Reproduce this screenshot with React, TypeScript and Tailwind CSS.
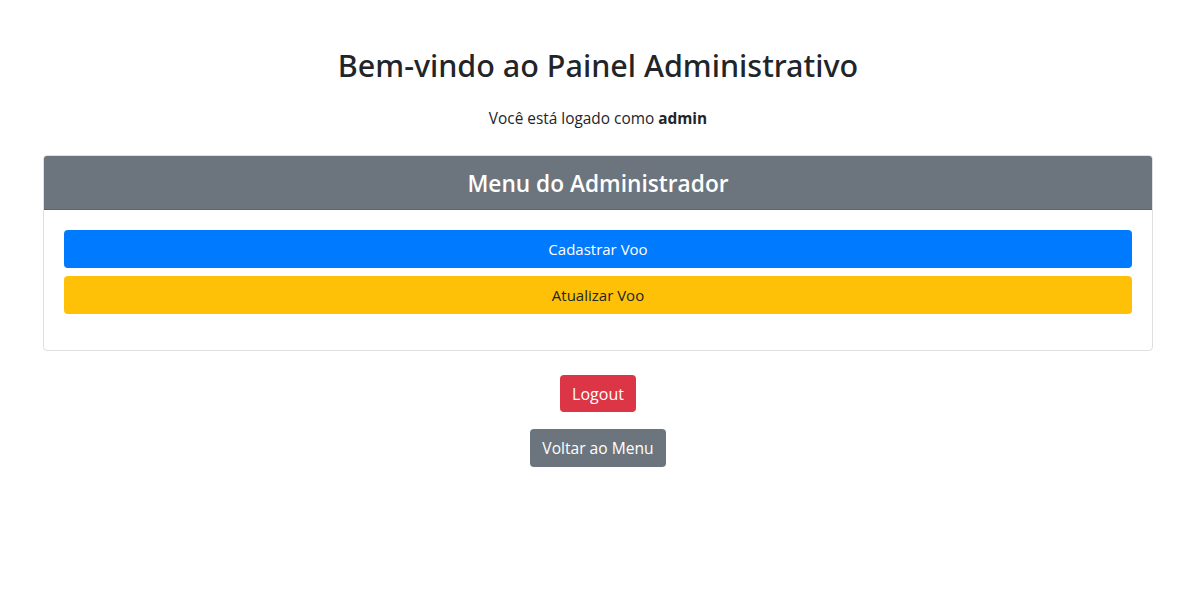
import React from "react";

export default function App() {
  return (
    <div
      className="min-h-screen bg-white text-[#212529] text-[16px] leading-6"
      style={{ fontFamily: '"Open Sans", "Noto Sans", Arial, sans-serif' }}
    >
      <div className="mx-auto w-[1140px] pl-[14px] pr-[16px] pt-[46px] text-center">
        <h2
          className="text-[30.5px] leading-[1.26] font-medium mb-[23px]"
          style={{ fontFamily: '"Noto Sans", "Open Sans", Arial, sans-serif' }}
        >
          Bem-vindo ao Painel Administrativo
        </h2>
        <p className="text-[15.4px] mb-[24px]">
          Você está logado como <strong className="font-bold">admin</strong>
        </p>
        <div className="border border-black/[0.125] rounded-[4px] overflow-hidden text-left">
          <div className="bg-[#6c757d] text-white border-b border-black/[0.125] px-5 pt-[14px] pb-[10px]">
            <h4 className="text-[22.7px] leading-[1.27] font-semibold text-center">
              Menu do Administrador
            </h4>
          </div>
          <div className="px-5 pt-5 pb-9 flex flex-col gap-2">
            <button className="w-full h-[38px] rounded-[4px] bg-[#007bff] text-white text-[15px]">
              Cadastrar Voo
            </button>
            <button className="w-full h-[38px] rounded-[4px] bg-[#ffc107] text-[#212529] text-[15px]">
              Atualizar Voo
            </button>
          </div>
        </div>
        <div className="flex flex-col items-center mt-6 gap-[17px]">
          <button className="h-[37px] px-3 rounded-[4px] bg-[#dc3545] text-white text-[16px]">
            Logout
          </button>
          <button className="h-[38px] px-3 rounded-[4px] bg-[#6c757d] text-white text-[15.6px]">
            Voltar ao Menu
          </button>
        </div>
      </div>
    </div>
  );
}
